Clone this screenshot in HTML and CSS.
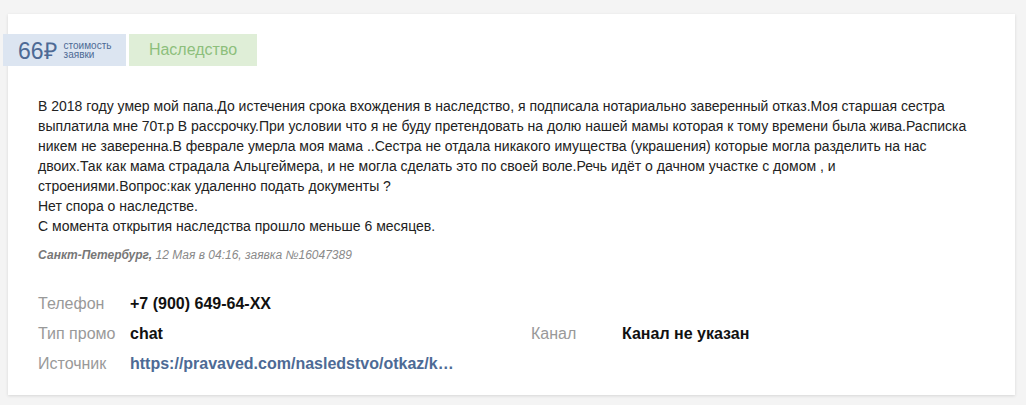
FILE: index.html
```html
<!DOCTYPE html>
<html lang="ru">
<head>
  <meta charset="UTF-8">
  <title>Заявка</title>
  <link rel="stylesheet" href="styles.css">
</head>
<body>
  <div class="card">
    <div class="tags">
      <div class="price">
        <span class="price-sum">66₽</span>
        <span class="price-note">стоимость<br>заявки</span>
      </div>
      <div class="category">Наследство</div>
    </div>

    <div class="question">
      В 2018 году умер мой папа.До истечения срока вхождения в наследство, я подписала нотариально заверенный отказ.Моя старшая сестра выплатила мне 70т.р В рассрочку.При условии что я не буду претендовать на долю нашей мамы которая к тому времени была жива.Расписка никем не заверенна.В феврале умерла моя мама ..Сестра не отдала никакого имущества (украшения) которые могла разделить на нас двоих.Так как мама страдала Альцгеймера, и не могла сделать это по своей воле.Речь идёт о дачном участке с домом , и строениями.Вопрос:как удаленно подать документы ?<br>
      Нет спора о наследстве.<br>
      С момента открытия наследства прошло меньше 6 месяцев.
    </div>

    <div class="meta"><b>Санкт-Петербург,</b> 12 Мая в 04:16, заявка №16047389</div>

    <div class="info">
      <span class="label">Телефон</span>
      <span class="value">+7 (900) 649-64-XX</span>
      <span></span>
      <span></span>

      <span class="label">Тип промо</span>
      <span class="value">chat</span>
      <span class="label">Канал</span>
      <span class="value">Канал не указан</span>

      <span class="label">Источник</span>
      <a class="value link" href="#">https://pravaved.com/nasledstvo/otkaz/kak-udalenno-podat-dokumenty</a>
      <span></span>
      <span></span>
    </div>
  </div>
</body>
</html>
```

FILE: styles.css
```css
body {
  font-family: "Liberation Sans", Arial, sans-serif;
  background: #f4f4f4;
  margin: 0;
  padding: 14px 11px 11px 8px;
}

.card {
  background: white;
  box-shadow: 0 1px 3px rgba(0,0,0,0.12);
  padding: 20px 30px 10px 30px;
}

.tags {
  display: flex;
  gap: 3px;
  margin-left: -35px;
  height: 32px;
}

.price {
  display: flex;
  align-items: center;
  background: #dce5f1;
  color: #4d6a95;
  width: 123px;
  padding-left: 15px;
  box-sizing: border-box;
}

.price-sum {
  font-size: 23px;
  margin-right: 7px;
}

.price-note {
  font-size: 10px;
  line-height: 9px;
}

.category {
  background: #dfeed7;
  color: #8dbf7c;
  font-size: 16px;
  width: 128px;
  display: flex;
  align-items: center;
  justify-content: center;
}

.question {
  margin-top: 30px;
  font-size: 14px;
  line-height: 20px;
  color: #222;
}

.meta {
  margin-top: 12px;
  font-size: 12px;
  font-style: italic;
  color: #8a8a8a;
}

.meta b {
  color: #777;
}

.info {
  margin-top: 33px;
  display: grid;
  grid-template-columns: 92px 401px 91px auto;
  grid-auto-rows: 30px;
  font-size: 16px;
}

.label {
  color: #999;
}

.value {
  font-weight: bold;
  color: #111;
}

.link {
  color: #4d6a95;
  text-decoration: none;
  width: 324px;
  white-space: nowrap;
  overflow: hidden;
  text-overflow: ellipsis;
}
```
